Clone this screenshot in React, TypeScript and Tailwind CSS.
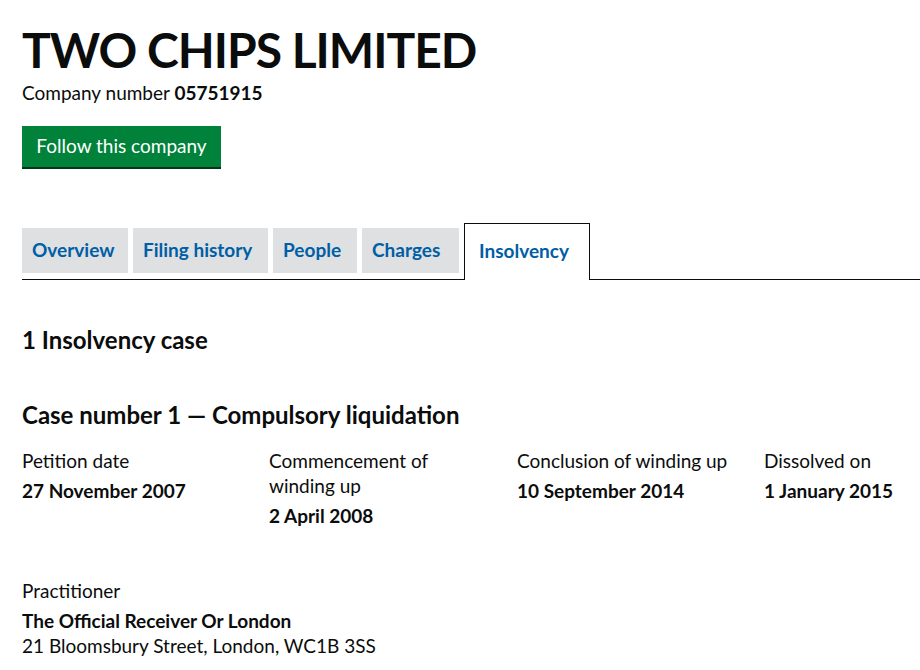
export default function App() {
  const tabs = [
    { name: 'Overview', w: 'w-[106px]' },
    { name: 'Filing history', w: 'w-[135px]' },
    { name: 'People', w: 'w-[84px]' },
    { name: 'Charges', w: 'w-[97px]' },
  ];
  const dates = [
    { label: 'Petition date', value: '27 November 2007' },
    { label: 'Commencement of winding up', value: '2 April 2008' },
    { label: 'Conclusion of winding up', value: '10 September 2014' },
    { label: 'Dissolved on', value: '1 January 2015' },
  ];

  return (
    <main className="min-h-screen bg-white pl-[22px] text-[#0b0c0c] font-['Lato',sans-serif]">
      <h1 className="pt-[22px] text-[48px] font-bold leading-[56px] tracking-[-1px]">TWO CHIPS LIMITED</h1>
      <p className="mt-[2px] text-[19px] leading-[25px]">
        Company number <strong className="font-bold">05751915</strong>
      </p>

      <button className="mt-[21px] h-[41px] w-[199px] bg-[#00823b] text-[19px] text-white shadow-[0_2px_0_#003618]">
        Follow this company
      </button>

      {/* Tabs */}
      <nav className="mt-[56px] flex items-end border-b border-[#0b0c0c]">
        {tabs.map((t) => (
          <a key={t.name} className={`mr-[5px] mb-[6px] flex h-[45px] items-center bg-[#dee0e2] pl-[10px] text-[19px] font-bold text-[#005ea5] ${t.w}`}>
            {t.name}
          </a>
        ))}
        <a className="-mb-px flex h-[57px] w-[126px] items-center border border-b-0 border-[#0b0c0c] bg-white pl-[14px] pb-[2px] text-[19px] font-bold text-[#005ea5]">
          Insolvency
        </a>
      </nav>

      <h2 className="mt-[45px] text-[24px] font-bold leading-[30px]">1 Insolvency case</h2>

      <h2 className="mt-[45px] text-[24px] font-bold leading-[30px]">Case number 1 — Compulsory liquidation</h2>

      <dl className="mt-[18px] grid grid-cols-[247px_248px_247px_1fr] text-[19px] leading-[25px]">
        {dates.map((d) => (
          <div key={d.label} className="pr-[24px]">
            <dt>{d.label}</dt>
            <dd className="mt-[5px] font-bold">{d.value}</dd>
          </div>
        ))}
      </dl>

      <dl className="mt-[50px] text-[19px] leading-[25px]">
        <dt>Practitioner</dt>
        <dd className="mt-[5px] font-bold">The Official Receiver Or London</dd>
        <dd>21 Bloomsbury Street, London, WC1B 3SS</dd>
      </dl>
    </main>
  );
}
